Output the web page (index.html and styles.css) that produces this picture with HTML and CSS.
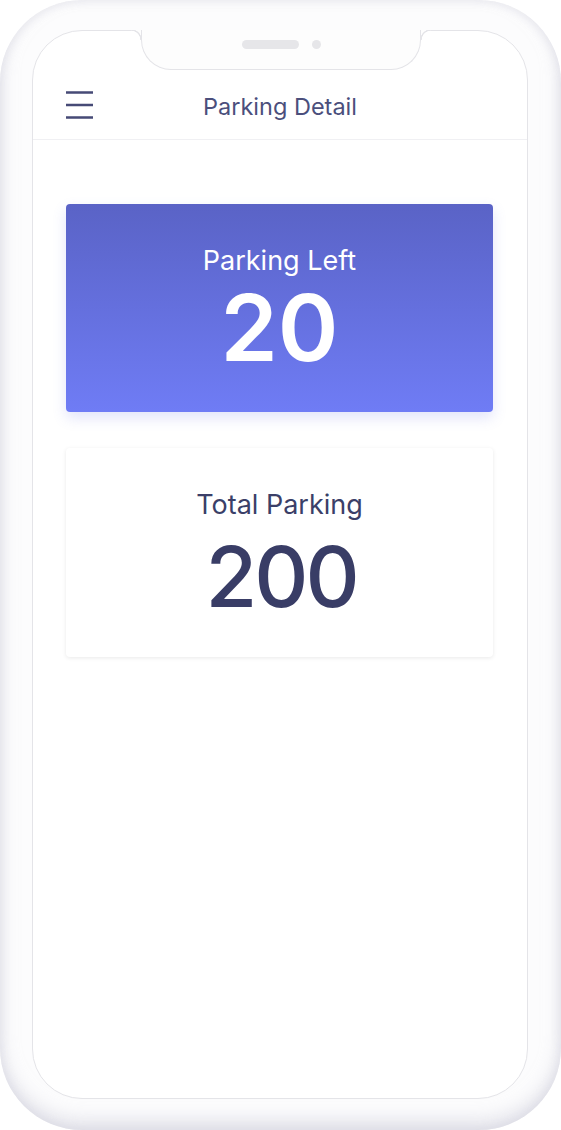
FILE: index.html
```html
<!DOCTYPE html>
<html lang="en">
<head>
    <meta charset="UTF-8">
    <meta name="viewport" content="width=device-width, initial-scale=1.0">
    <title>Parking Detail</title>
    <link rel="stylesheet" href="styles.css">
</head>
<body>
    <div class="phone">
        <div class="screen">
            <div class="notch">
                <span class="speaker"></span>
                <span class="camera"></span>
            </div>
            <div class="header">
                <svg class="menu" width="28" height="28" viewBox="0 0 28 28">
                    <path d="M0 1.5H27M0 14H27M0 26.5H27" stroke="#464a76" stroke-width="2.4" fill="none"/>
                </svg>
                <h1 class="title">Parking Detail</h1>
                <span></span>
            </div>
            <div class="content">
                <div class="card card-primary">
                    <div class="card-label">Parking Left</div>
                    <div class="card-value">20</div>
                </div>
                <div class="card card-plain">
                    <div class="card-label">Total Parking</div>
                    <div class="card-value">200</div>
                </div>
            </div>
        </div>
    </div>
</body>
</html>
```

FILE: styles.css
```css
body {
    margin: 0;
    background: #ffffff;
    font-family: Inter, "Noto Sans", sans-serif;
}
.phone {
    width: 561px;
    height: 1130px;
    box-sizing: border-box;
    padding: 30px 33px 31px 32px;
    border-radius: 82px;
    background: #fcfcfd;
    box-shadow: inset 0 -10px 18px rgba(205, 205, 218, 0.55), inset 0 0 12px rgba(215, 215, 225, 0.6);
}
.screen {
    position: relative;
    height: 100%;
    box-sizing: border-box;
    border: 1px solid #e4e4e8;
    border-radius: 50px;
    background: #ffffff;
}
.notch {
    position: absolute;
    top: -1px;
    left: 108px;
    width: 278px;
    height: 39px;
    box-sizing: content-box;
    display: flex;
    justify-content: center;
    align-items: flex-start;
    gap: 13px;
    background: #fdfdfd;
    border: 1px solid #e4e4e8;
    border-top: none;
    border-radius: 0 0 30px 30px;
}
.notch::before,
.notch::after {
    content: "";
    position: absolute;
    top: 0;
    width: 10px;
    height: 10px;
}
.notch::before {
    left: -11px;
    background: radial-gradient(circle at 0 100%, #ffffff 9px, #e4e4e8 9.6px, #e4e4e8 10.4px, #fdfdfd 11px);
}
.notch::after {
    right: -11px;
    background: radial-gradient(circle at 100% 100%, #ffffff 9px, #e4e4e8 9.6px, #e4e4e8 10.4px, #fdfdfd 11px);
}
.speaker {
    margin-top: 10px;
    width: 57px;
    height: 9px;
    border-radius: 5px;
    background: #e6e6e9;
}
.camera {
    margin-top: 10px;
    width: 9px;
    height: 9px;
    border-radius: 50%;
    background: #e6e6e9;
}
.header {
    display: grid;
    grid-template-columns: 28px 1fr 28px;
    align-items: center;
    padding: 62px 33px 19px;
    border-bottom: 1px solid #f0f0f3;
}
.menu {
    display: block;
    margin-top: -4px;
}
.title {
    margin: 0;
    text-align: center;
    font-size: 23.5px;
    font-weight: 400;
    line-height: 27px;
    color: #4b4f7c;
}
.content {
    padding: 64px 33px 0;
}
.card {
    width: 427px;
    box-sizing: border-box;
    border-radius: 4px;
    text-align: center;
}
.card-primary {
    height: 208px;
    padding-top: 42px;
    color: #ffffff;
    background: linear-gradient(180deg, #5a63c6 0%, #6f7cf5 100%);
    box-shadow: 0 6px 14px rgba(95, 105, 225, 0.18);
}
.card-primary .card-label {
    font-size: 27px;
    line-height: 30px;
}
.card-primary .card-value {
    margin-top: 6px;
    font-size: 92px;
    font-weight: 600;
    line-height: 1;
}
.card-plain {
    height: 209px;
    margin-top: 36px;
    padding-top: 40px;
    color: #3b3f68;
    background: #ffffff;
    box-shadow: 0 1px 4px rgba(0, 0, 0, 0.09);
}
.card-plain .card-label {
    font-size: 27px;
    line-height: 33px;
}
.card-plain .card-value {
    margin-top: 14px;
    padding-left: 3px;
    font-size: 84px;
    font-weight: 500;
    line-height: 1;
    letter-spacing: -3px;
    color: #393d66;
}
```
